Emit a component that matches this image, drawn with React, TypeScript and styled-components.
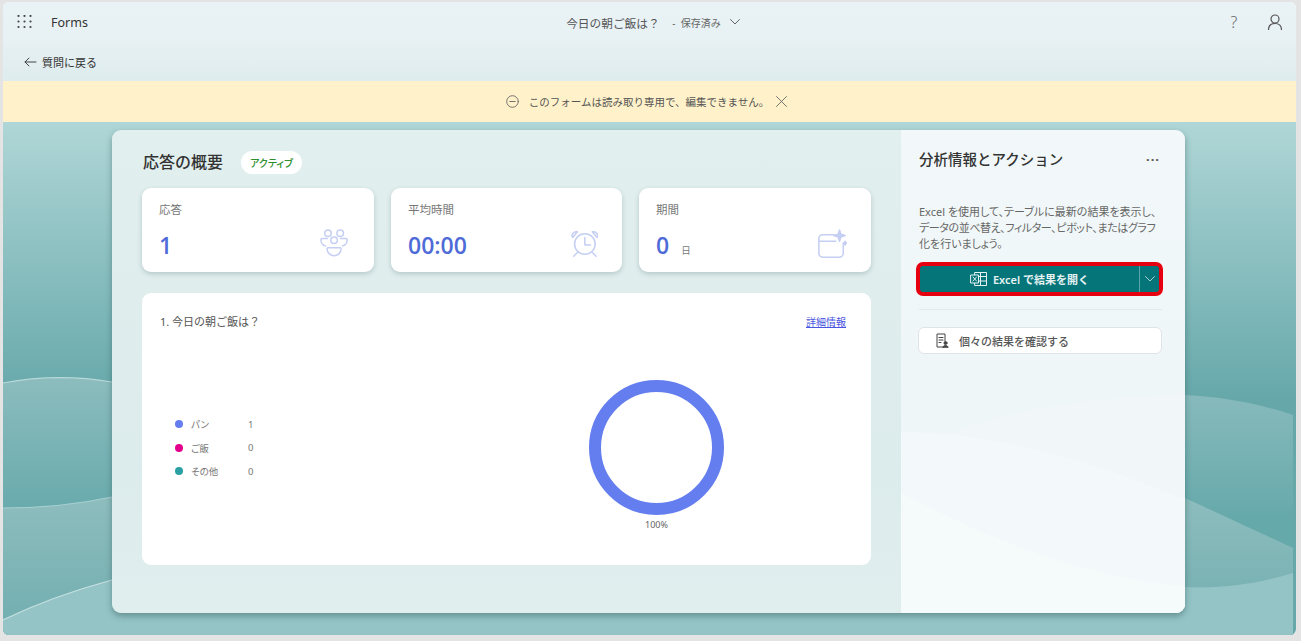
import styled, { createGlobalStyle } from 'styled-components';

const GlobalStyle = createGlobalStyle`
  html, body {
    margin: 0;
    padding: 0;
    height: 100%;
    background: #e4e4e4;
    font-family: "Noto Sans", "Noto Sans CJK JP", sans-serif;
  }
  * { box-sizing: border-box; }
`;

const Page = styled.div`
  width: 1301px;
  height: 641px;
  padding: 2px 5px 6px 3px;
  overflow: hidden;
`;

const Frame = styled.div`
  width: 100%;
  height: 100%;
  border-radius: 6px;
  overflow: hidden;
  display: flex;
  flex-direction: column;
  background: #fff;
`;

const Header = styled.div`
  height: 79px;
  background: linear-gradient(#e9f2f5 0%, #e8f1f4 45%, #deecee 100%);
  display: flex;
  flex-direction: column;
`;

const TopBar = styled.div`
  height: 40px;
  display: flex;
  align-items: center;
  padding: 0 13px 0 14px;
`;

const AppName = styled.span`
  font-size: 12.5px;
  color: #333;
  margin-left: 19px;
`;

const TitleGroup = styled.div`
  flex: 1;
  display: flex;
  justify-content: center;
  align-items: center;
  gap: 4px;
  padding-right: 9px;
  color: #555;
  font-size: 11.7px;
`;

const Saved = styled.span`
  font-size: 10px;
  color: #666;
  margin-left: 6px;
`;

const TopRight = styled.div`
  display: flex;
  align-items: center;
  gap: 26px;
`;

const Help = styled.span`
  font-size: 16px;
  font-weight: 300;
  color: #666;
  width: 14px;
  text-align: center;
`;

const BackRow = styled.div`
  display: flex;
  align-items: center;
  gap: 5px;
  padding: 12px 0 0 21px;
  font-size: 11px;
  color: #333;
`;

const Notice = styled.div`
  height: 41px;
  background: #fff1c9;
  display: flex;
  align-items: center;
  justify-content: center;
  gap: 10px;
  font-size: 10.5px;
  color: #555;
  padding-right: 6px;
`;

const NoticeClose = styled.svg`
  margin-left: -3px;
  fill: none;
  stroke: #666;
  stroke-width: 0.9;
  stroke-linecap: round;
`;

const Stage = styled.div`
  flex: 1;
  position: relative;
  background: linear-gradient(#b0d6d7 0%, #66a8aa 54%, #66a8aa 100%);
  padding: 8px 111px 22px 109px;
`;

const Waves = styled.svg`
  position: absolute;
  inset: 0;
  width: 100%;
  height: 100%;
`;

const Sheet = styled.div`
  position: relative;
  height: 483px;
  border-radius: 9px;
  overflow: hidden;
  display: flex;
  box-shadow: 0 3px 6px rgba(40, 80, 80, 0.45);
`;

const Summary = styled.div`
  width: 789px;
  flex: none;
  background: linear-gradient(#e2efef, #dcebeb 70%, #e0eeee);
  padding: 21px 30px 0 30px;
`;

const HeadingRow = styled.div`
  display: flex;
  align-items: center;
  gap: 18px;
  height: 23px;
`;

const Heading = styled.h1`
  margin: 0;
  padding: 0 0 3px 1px;
  font-size: 16px;
  font-weight: 500;
  color: #333;
`;

const Pill = styled.span`
  height: 23px;
  padding: 0 9px;
  display: flex;
  align-items: center;
  border-radius: 12px;
  background: #fff;
  color: #2f8f2f;
  font-size: 10px;
  font-weight: 500;
  font-feature-settings: "palt";
`;

const Stats = styled.div`
  margin-top: 14px;
  display: grid;
  grid-template-columns: 232px 231px 232px;
  gap: 17px;
`;

const StatCard = styled.div`
  height: 84px;
  border-radius: 9px;
  background: #fff;
  box-shadow: 0 2px 5px rgba(60, 90, 90, 0.25);
  padding: 13px 17px 0 17px;
  position: relative;
  display: flex;
  flex-direction: column;
`;

const StatLabel = styled.span`
  font-size: 11.5px;
  color: #777;
`;

const StatValue = styled.div`
  margin-top: 12px;
  display: flex;
  align-items: baseline;
  gap: 12px;
  font-family: "Open Sans", sans-serif;
  font-size: 23px;
  font-weight: 600;
  color: #4f6bd8;
`;

const Unit = styled.span`
  font-size: 9.5px;
  font-weight: 400;
  color: #777;
  font-family: "Noto Sans CJK JP", sans-serif;
`;

const StatIcon = styled.svg`
  position: absolute;
  right: 24px;
  bottom: 13px;
  width: 30px;
  height: 30px;
  fill: none;
  stroke: #c5cef3;
  stroke-width: 1.6;
  stroke-linecap: round;
  stroke-linejoin: round;
`;

const ChartCard = styled.div`
  margin-top: 21px;
  height: 272px;
  border-radius: 9px;
  background: #fff;
  padding: 20px 25px 0 18px;
  display: flex;
  flex-direction: column;
`;

const QuestionRow = styled.div`
  display: flex;
  justify-content: space-between;
  align-items: center;
  font-size: 11px;
  color: #555;
`;

const DetailLink = styled.a`
  font-size: 10px;
  color: #4a55e0;
  text-decoration: underline;
`;

const ChartBody = styled.div`
  flex: 1;
  display: flex;
  align-items: flex-start;
`;

const Legend = styled.div`
  width: 280px;
  padding: 86px 0 0 15px;
  display: flex;
  flex-direction: column;
  gap: 5.5px;
`;

const LegendRow = styled.div`
  display: grid;
  grid-template-columns: 16px 57px auto;
  align-items: center;
  height: 18px;
  font-size: 9.5px;
  color: #777;
  font-feature-settings: "palt";
`;

const Dot = styled.span<{ $color: string }>`
  width: 8px;
  height: 8px;
  border-radius: 50%;
  background: ${(props) => props.$color};
`;

const Donut = styled.div`
  margin: 51px 0 0 149px;
  display: flex;
  flex-direction: column;
  align-items: center;
  gap: 3px;
  font-size: 9px;
  color: #666;
`;

const Ring = styled.div`
  width: 135px;
  height: 135px;
  border-radius: 50%;
  border: 12px solid #647eef;
  background: #fff;
`;

const Actions = styled.div`
  flex: 1;
  min-width: 0;
  position: relative;
  background: linear-gradient(#f2f8f9, #eff6f7 55%, #f0f7f8);
`;

const ActionsWaves = styled.svg`
  position: absolute;
  left: 0;
  top: 0;
  width: 100%;
  height: 100%;
`;

const ActionsBody = styled.div`
  position: relative;
  padding: 17px 23px 0 18px;
`;

const ActionsHead = styled.div`
  display: flex;
  justify-content: space-between;
  align-items: center;
  height: 23px;
`;

const ActionsTitle = styled.h2`
  margin: 0;
  font-size: 14.5px;
  font-weight: 500;
  color: #333;
`;

const More = styled.span`
  font-size: 13px;
  font-weight: 700;
  color: #555;
  letter-spacing: 1px;
  padding-right: 2px;
`;

const ActionsText = styled.p`
  margin: 34px 0 0 0;
  font-size: 11px;
  line-height: 16px;
  color: #666;
  white-space: nowrap;
  font-feature-settings: "palt";
`;

const TightLine = styled.span`
  letter-spacing: -0.42px;
`;

const SplitButton = styled.div`
  margin: 10px -1px 0 -3px;
  height: 34px;
  border: 4px solid #e6000f;
  border-radius: 7px;
  background: #05757a;
  display: flex;
  align-items: center;
  color: #e6f3f3;
  font-size: 11px;
  font-weight: 600;
`;

const MainAction = styled.div`
  flex: 1;
  display: flex;
  justify-content: center;
  align-items: center;
  gap: 5px;
`;

const ChevronPart = styled.div`
  width: 20px;
  height: 100%;
  border-left: 1px solid #5ea5a8;
  display: flex;
  align-items: center;
  justify-content: center;
`;

const Divider = styled.div`
  margin-top: 13px;
  height: 1px;
  background: #e3eaea;
`;

const OutlineButton = styled.div`
  margin: 17px 0 0 -1px;
  height: 27px;
  border: 1px solid #dfe5e6;
  border-radius: 6px;
  background: #fff;
  display: flex;
  align-items: center;
  gap: 10px;
  padding-left: 16px;
  font-size: 11px;
  font-weight: 500;
  color: #555;
`;

const Line = styled.svg`
  fill: none;
  stroke: currentColor;
  stroke-linecap: round;
  stroke-linejoin: round;
`;

export default function App() {
  return (
    <>
      <GlobalStyle />
      <Page>
        <Frame>
          <Header>
            <TopBar>
              <svg width="15" height="14" viewBox="0 0 15 14" fill="#444">
                {[1, 6.5, 12].map((y) =>
                  [1.5, 7.5, 13.5].map((x) => <circle key={`${x}-${y}`} cx={x} cy={y} r="1.1" />),
                )}
              </svg>
              <AppName>Forms</AppName>
              <TitleGroup>
                <span>今日の朝ご飯は？</span>
                <Saved>&nbsp;-&nbsp; 保存済み</Saved>
                <Line width="10" height="6" viewBox="0 0 10 6" style={{ marginLeft: 5, color: '#666' }} strokeWidth="1">
                  <path d="M0.5 0.5 5 5l4.5-4.5" />
                </Line>
              </TitleGroup>
              <TopRight>
                <Help>?</Help>
                <Line width="16" height="16" viewBox="0 0 16 16" strokeWidth="1.2" style={{ color: '#555' }}>
                  <circle cx="8" cy="5" r="4" />
                  <path d="M1.5 16c0-4 2.5-6.5 6.5-6.5S14.500 12 14.500 16" />
                </Line>
              </TopRight>
            </TopBar>
            <BackRow>
              <Line width="13" height="10" viewBox="0 0 13 10" strokeWidth="1" style={{ color: '#444' }}>
                <path d="M12 5H1M5 1 1 5l4 4" />
              </Line>
              質問に戻る
            </BackRow>
          </Header>
          <Notice>
            <Line width="13" height="13" viewBox="0 0 13 13" strokeWidth="0.9" style={{ color: '#666' }}>
              <circle cx="6.500" cy="6.500" r="5.800" />
              <path d="M3.800 6.500h5.400" />
            </Line>
            <span>このフォームは読み取り専用で、編集できません。</span>
            <NoticeClose width="11" height="11" viewBox="0 0 11 11">
              <path d="M0.500 0.500l10 10M10.500 0.500l-10 10" />
            </NoticeClose>
          </Notice>
          <Stage>
            <Waves viewBox="3 122 1293 513" preserveAspectRatio="none">
              <defs>
                <linearGradient id="bandA" x1="0" y1="0" x2="0" y2="1">
                  <stop offset="0" stopColor="#8cbcbe" />
                  <stop offset="0.55" stopColor="#66a9ab" />
                  <stop offset="1" stopColor="#66a9ab" />
                </linearGradient>
                <linearGradient id="bandB" x1="0" y1="0" x2="0" y2="1">
                  <stop offset="0" stopColor="#8ebdbe" />
                  <stop offset="1" stopColor="#70adaf" />
                </linearGradient>
              </defs>
              <path d="M3 383C30 378 70 375 112 382L1185 395C1225 397 1260 404 1293 415V635H3z" fill="url(#bandA)" />
              <path d="M3 508C45 508 80 504 112 497L1185 498 1293 548V635H3z" fill="url(#bandB)" />
              <path d="M3 620C40 602 75 590 112 580L1185 587C1225 589 1260 583 1293 573V635H3z" fill="#95c4c6" />
              <path d="M3 383C30 378 70 375 112 382" fill="none" stroke="#b8d9d9" strokeWidth="1.2" />
              <path d="M3 508C45 508 80 504 112 497" fill="none" stroke="#a9d0d1" strokeWidth="1.2" />
              <path d="M3 620C40 602 75 590 112 580" fill="none" stroke="#c4e0e0" strokeWidth="1.2" />
            </Waves>
            <Sheet>
              <Summary>
                <HeadingRow>
                  <Heading>応答の概要</Heading>
                  <Pill>アクティブ</Pill>
                </HeadingRow>
                <Stats>
                  <StatCard>
                    <StatLabel>応答</StatLabel>
                    <StatValue>1</StatValue>
                    <StatIcon viewBox="0 0 32 32">
                      <circle cx="8.500" cy="4.500" r="3.500" />
                      <circle cx="21.500" cy="4.500" r="3.500" />
                      <circle cx="15" cy="12" r="3.500" />
                      <path d="M8 10H2.500C1.500 10 1 10.500 1 11.500c0 3 2 6 5 6.500M22 10h5.500c1 0 1.500.5 1.500 1.500 0 3-2 6-5 6.500" />
                      <path d="M8.500 20h13c.6 0 1 .4 1 1 0 4-3.500 7.500-7.500 7.500S7.500 25 7.500 21c0-.6.4-1 1-1z" />
                    </StatIcon>
                  </StatCard>
                  <StatCard>
                    <StatLabel>平均時間</StatLabel>
                    <StatValue>00:00</StatValue>
                    <StatIcon viewBox="-2 0 32 32">
                      <circle cx="16" cy="16" r="11" />
                      <path d="M16 9v8h6" />
                      <path d="M3 9c-2-3 1-7 5-6M29 9c2-3-1-7-5-6M3 9l5-6M29 9l-5-6" />
                      <path d="M8 25l-4 4M24 25l4 4" />
                    </StatIcon>
                  </StatCard>
                  <StatCard>
                    <StatLabel>期間</StatLabel>
                    <StatValue>
                      0<Unit>日</Unit>
                    </StatValue>
                    <StatIcon viewBox="0 0 32 32">
                      <path d="M18 6H6a4 4 0 0 0-4 4v16a4 4 0 0 0 4 4h18a4 4 0 0 0 4-4V16" />
                      <path d="M2 13h18" />
                      <path d="M24 1l1.500 4.500L30 7l-4.500 1.500L24 13l-1.500-4.500L18 7l4.500-1.500zM30 13l.6 1.400L32 15l-1.400.6L30 17l-.6-1.400L28 15l1.400-.6z" fill="#c5cef3" />
                    </StatIcon>
                  </StatCard>
                </Stats>
                <ChartCard>
                  <QuestionRow>
                    <span>1. 今日の朝ご飯は？</span>
                    <DetailLink>詳細情報</DetailLink>
                  </QuestionRow>
                  <ChartBody>
                    <Legend>
                      <LegendRow>
                        <Dot $color="#647eef" />
                        <span>パン</span>
                        <span>1</span>
                      </LegendRow>
                      <LegendRow>
                        <Dot $color="#e3008c" />
                        <span>ご飯</span>
                        <span>0</span>
                      </LegendRow>
                      <LegendRow>
                        <Dot $color="#2aa0a4" />
                        <span>その他</span>
                        <span>0</span>
                      </LegendRow>
                    </Legend>
                    <Donut>
                      <Ring />
                      <span>100%</span>
                    </Donut>
                  </ChartBody>
                </ChartCard>
              </Summary>
              <Actions>
                <ActionsWaves viewBox="901 130 284 483" preserveAspectRatio="none">
                  <path d="M901 453C960 425 1040 398 1185 394V613H901z" fill="#f1f7f8" />
                  <path d="M901 432C990 432 1090 460 1185 500V613H901z" fill="#f3f9fa" />
                  <path d="M901 493C970 530 1070 575 1185 587V613H901z" fill="#f5fbfb" />
                </ActionsWaves>
                <ActionsBody>
                  <ActionsHead>
                    <ActionsTitle>分析情報とアクション</ActionsTitle>
                    <More>···</More>
                  </ActionsHead>
                  <ActionsText>
                    Excel を使用して、テーブルに最新の結果を表示し、
                    <br />
                    <TightLine>データの並べ替え、フィルター、ピボット、またはグラフ</TightLine>
                    <br />
                    化を行いましょう。
                  </ActionsText>
                  <SplitButton>
                    <MainAction>
                      <Line width="18" height="16" viewBox="0 0 18 16" strokeWidth="1">
                        <path d="M5 1.500h11.500v13H5z M10.500 1.500v13 M5 5.500h11.500 M5 10h11.500" />
                        <path d="M1 4h7.500v8H1z" fill="#05757a" />
                        <path d="M3 6l3.500 4M6.500 6L3 10" />
                      </Line>
                      <span>Excel で結果を開く</span>
                    </MainAction>
                    <ChevronPart>
                      <Line width="10" height="6" viewBox="0 0 10 6" strokeWidth="1" style={{ color: '#a5d0d2' }}>
                        <path d="M0.500 0.500 5 5l4.500-4.500" />
                      </Line>
                    </ChevronPart>
                  </SplitButton>
                  <Divider />
                  <OutlineButton>
                    <Line width="14" height="15" viewBox="0 0 14 15" strokeWidth="1" style={{ color: '#444' }}>
                      <path d="M9 14H2V1h8v7M4 4.500h4M4 7h4M4 9.500h2" />
                      <circle cx="10.500" cy="10" r="1.500" fill="#444" />
                      <path d="M8 14.500c0-1.500 1-2 2.500-2s2.500.5 2.500 2z" fill="#444" />
                    </Line>
                    個々の結果を確認する
                  </OutlineButton>
                </ActionsBody>
              </Actions>
            </Sheet>
          </Stage>
        </Frame>
      </Page>
    </>
  );
}
